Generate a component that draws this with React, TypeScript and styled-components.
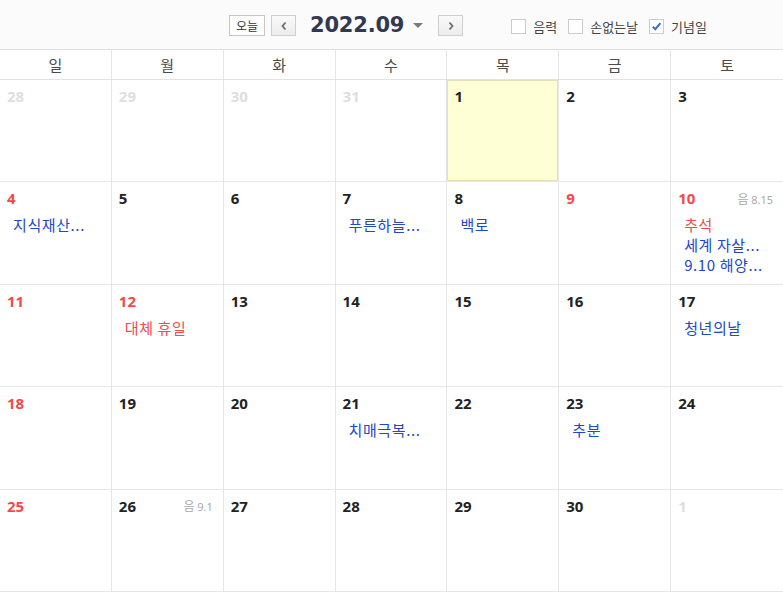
import React from 'react'
import styled, { createGlobalStyle } from 'styled-components'

const GlobalStyle = createGlobalStyle`
  html, body {
    margin: 0;
    padding: 0;
    background: #fff;
  }
  body {
    font-family: "Noto Sans CJK KR", "Noto Sans", sans-serif;
    color: #222;
  }
`

type Tone = 'normal' | 'sun' | 'muted'

type Event = { text: string; holiday?: boolean }

type Day = {
  n: number
  tone?: Tone
  today?: boolean
  lunar?: string
  events?: Event[]
}

const WEEKDAYS = ['일', '월', '화', '수', '목', '금', '토']

const DAYS: Day[] = [
  { n: 28, tone: 'muted' },
  { n: 29, tone: 'muted' },
  { n: 30, tone: 'muted' },
  { n: 31, tone: 'muted' },
  { n: 1, today: true },
  { n: 2 },
  { n: 3 },
  { n: 4, tone: 'sun', events: [{ text: '지식재산...' }] },
  { n: 5 },
  { n: 6 },
  { n: 7, events: [{ text: '푸른하늘...' }] },
  { n: 8, events: [{ text: '백로' }] },
  { n: 9, tone: 'sun' },
  {
    n: 10,
    tone: 'sun',
    lunar: '8.15',
    events: [{ text: '추석', holiday: true }, { text: '세계 자살...' }, { text: '9.10 해양...' }],
  },
  { n: 11, tone: 'sun' },
  { n: 12, tone: 'sun', events: [{ text: '대체 휴일', holiday: true }] },
  { n: 13 },
  { n: 14 },
  { n: 15 },
  { n: 16 },
  { n: 17, events: [{ text: '청년의날' }] },
  { n: 18, tone: 'sun' },
  { n: 19 },
  { n: 20 },
  { n: 21, events: [{ text: '치매극복...' }] },
  { n: 22 },
  { n: 23, events: [{ text: '추분' }] },
  { n: 24 },
  { n: 25, tone: 'sun' },
  { n: 26, lunar: '9.1' },
  { n: 27 },
  { n: 28 },
  { n: 29 },
  { n: 30 },
  { n: 1, tone: 'muted' },
]

const Chevron = ({ dir }: { dir: 'left' | 'right' }) => (
  <svg width="8" height="10" viewBox="0 0 8 10">
    <path
      d={dir === 'left' ? 'M5.5 1.5 L2.5 5 L5.5 8.5' : 'M2.5 1.5 L5.5 5 L2.5 8.5'}
      fill="none"
      stroke="#6d6d6d"
      strokeWidth="1.8"
    />
  </svg>
)

const Check = () => (
  <svg width="11" height="11" viewBox="0 0 11 11">
    <path d="M1.8 5.6 L4.3 8.2 L9.4 2.2" fill="none" stroke="#3b6fbf" strokeWidth="2" />
  </svg>
)

const App = () => {
  return (
    <>
      <GlobalStyle />
      <Page>
        <Toolbar>
          <Nav>
            <TodayButton>오늘</TodayButton>
            <ArrowButton aria-label="이전 달">
              <Chevron dir="left" />
            </ArrowButton>
            <Title>
              2022.09
              <Caret />
            </Title>
            <ArrowButton aria-label="다음 달">
              <Chevron dir="right" />
            </ArrowButton>
          </Nav>
          <Options>
            <Option>
              <Box />
              음력
            </Option>
            <Option>
              <Box />
              손없는날
            </Option>
            <Option>
              <Box>
                <Check />
              </Box>
              기념일
            </Option>
          </Options>
        </Toolbar>

        <WeekHead>
          {WEEKDAYS.map((w, i) => (
            <WeekLabel key={w} last={i === 6}>
              {w}
            </WeekLabel>
          ))}
        </WeekHead>

        <Grid>
          {DAYS.map((d, i) => (
            <Cell key={i} today={d.today} last={i % 7 === 6}>
              <CellTop>
                <DayNum tone={d.tone || 'normal'}>{d.n}</DayNum>
                {d.lunar && (
                  <Lunar>
                    음 <small>{d.lunar}</small>
                  </Lunar>
                )}
              </CellTop>
              {d.events && (
                <Events>
                  {d.events.map((e) => (
                    <EventLine key={e.text} holiday={e.holiday}>
                      {e.text}
                    </EventLine>
                  ))}
                </Events>
              )}
            </Cell>
          ))}
        </Grid>
      </Page>
    </>
  )
}

export default App

const Page = styled.div`
  width: 783px;
  height: 592px;
  overflow: hidden;
  background: #fff;
`

const Toolbar = styled.div`
  height: 49px;
  border-bottom: 1px solid #dedede;
  background: #fbfbfb;
  display: flex;
  align-items: center;
  padding-left: 229px;
  box-sizing: content-box;
`

const Nav = styled.div`
  display: flex;
  align-items: center;
`

const TodayButton = styled.button`
  height: 21px;
  width: 36px;
  padding: 0;
  margin-top: 2px;
  border: 1px solid #c6c6c6;
  background: #fff;
  font-family: "Noto Sans CJK KR", sans-serif;
  font-size: 12px;
  color: #333;
  line-height: 19px;
  cursor: pointer;
`

const ArrowButton = styled.button`
  height: 21px;
  width: 25px;
  margin-left: 6px;
  margin-top: 2px;
  padding: 0;
  border: 1px solid #cfcfcf;
  background: linear-gradient(#fafafa, #ececec);
  display: flex;
  align-items: center;
  justify-content: center;
  cursor: pointer;
`

const Title = styled.div`
  display: flex;
  align-items: center;
  margin: 0 9px 0 14px;
  font-family: "DejaVu Sans", Verdana, sans-serif;
  font-weight: bold;
  font-size: 21px;
  letter-spacing: -0.2px;
  color: #323852;
`

const Caret = styled.span`
  display: inline-block;
  margin-left: 9px;
  margin-top: 2px;
  border-left: 5px solid transparent;
  border-right: 5px solid transparent;
  border-top: 5px solid #7a7a7a;
`

const Options = styled.div`
  display: flex;
  align-items: center;
  margin-left: 48px;
  margin-top: 3px;
  gap: 11px;
`

const Option = styled.label`
  display: flex;
  align-items: center;
  gap: 7px;
  font-size: 13px;
  color: #444;
`

const Box = styled.span`
  width: 13px;
  height: 13px;
  border: 1px solid #cbcbcb;
  background: #fff;
  display: flex;
  align-items: center;
  justify-content: center;
`

const WeekHead = styled.div`
  display: grid;
  grid-template-columns: repeat(7, 1fr);
  height: 29px;
  border-bottom: 1px solid #e2e2e2;
`

const WeekLabel = styled.div<{ last?: boolean }>`
  display: flex;
  align-items: center;
  justify-content: center;
  font-size: 15px;
  color: #4a4a4a;
  border-right: ${(p) => (p.last ? 'none' : '1px solid #e6e6e6')};
`

const Grid = styled.div`
  display: grid;
  grid-template-columns: repeat(7, 1fr);
  grid-template-rows: repeat(5, 1fr);
  height: 512px;
`

const Cell = styled.div<{ today?: boolean; last?: boolean }>`
  position: relative;
  padding: 6px 10px 0 7px;
  border-right: ${(p) => (p.last ? 'none' : '1px solid #e6e6e6')};
  border-bottom: 1px solid #e6e6e6;
  background: ${(p) => (p.today ? '#ffffd6' : '#fff')};
  box-shadow: ${(p) => (p.today ? 'inset 0 0 0 1px #e4e2b4' : 'none')};
  overflow: hidden;
`

const CellTop = styled.div`
  display: flex;
  align-items: center;
  justify-content: space-between;
  height: 20px;
`

const toneColor: Record<Tone, string> = {
  normal: '#222',
  sun: '#f64848',
  muted: '#dedede',
}

const DayNum = styled.span<{ tone: Tone }>`
  font-family: "Noto Sans", sans-serif;
  font-weight: bold;
  font-size: 15px;
  color: ${(p) => toneColor[p.tone]};
`

const Lunar = styled.span`
  font-size: 12px;
  color: #aaa;
  & small {
    font-family: "Noto Sans", sans-serif;
    font-size: 11px;
  }
`

const Events = styled.div`
  margin-top: 7px;
  padding-left: 6px;
`

const EventLine = styled.div<{ holiday?: boolean }>`
  font-size: 15px;
  line-height: 20px;
  letter-spacing: 0.6px;
  white-space: nowrap;
  color: ${(p) => (p.holiday ? '#f24a4f' : '#2148c6')};
`
